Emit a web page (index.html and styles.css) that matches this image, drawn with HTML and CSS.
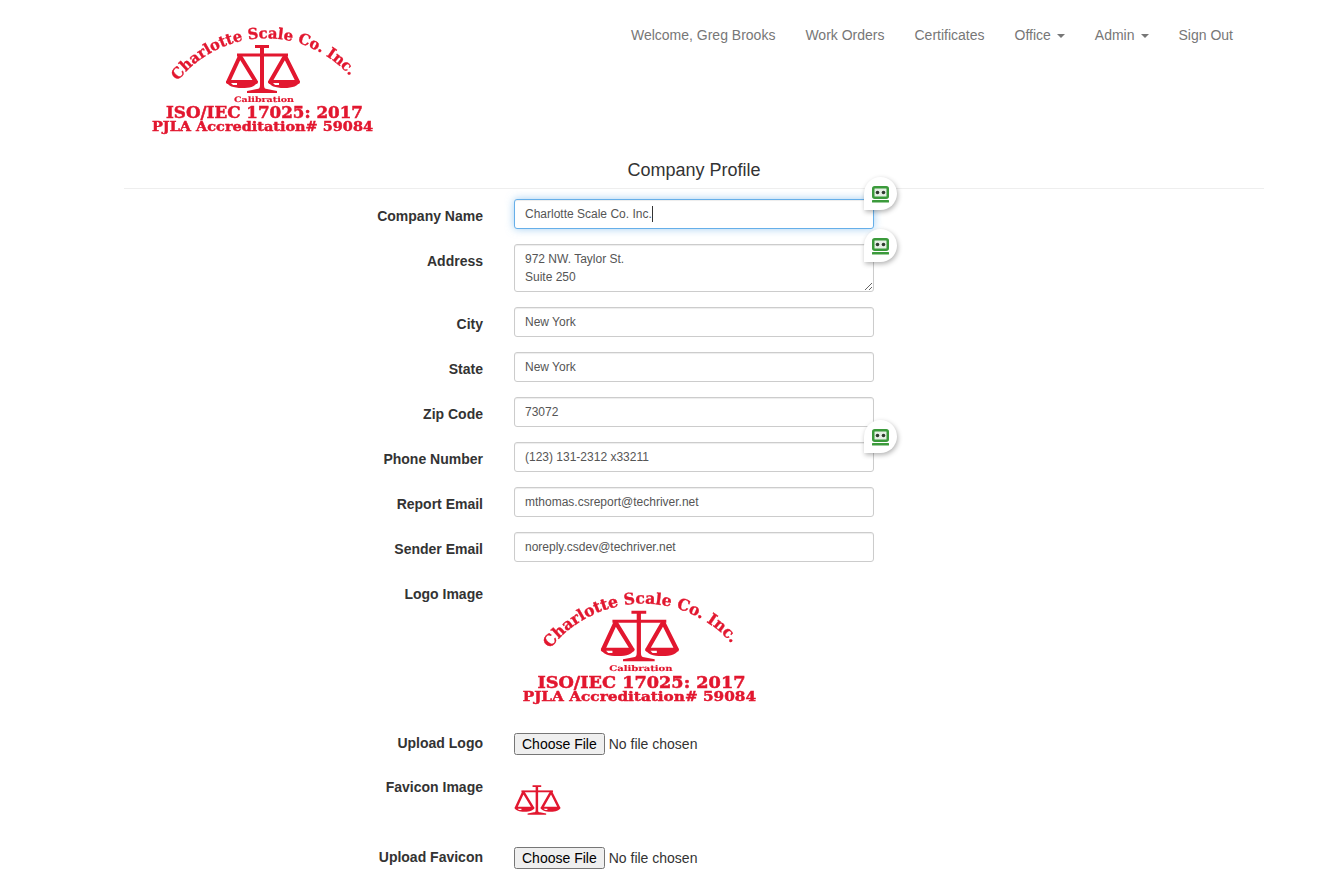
FILE: index.html
```html
<!DOCTYPE html>
<html lang="en">
<head>
<meta charset="utf-8">
<title>Company Profile</title>
<link rel="stylesheet" href="styles.css">
</head>
<body>
<div class="page">
  <header class="topbar">
    <a class="brand" href="#">
      <svg class="logo logo-nav" viewBox="0 0 250 125" aria-label="Charlotte Scale Co. Inc. logo">
        <defs><path id="arc1" d="M38 66 A 112 112 0 0 1 214 66"/></defs>
        <text class="logo-arc"><textPath href="#arc1" textLength="196" lengthAdjust="spacingAndGlyphs">Charlotte Scale Co. Inc.</textPath></text>
        <g class="scale">
          <path class="solid" d="M115 30h14v3h-5v37c0 3 1 4 3 4l10 2v2h-30v-2l10-2c2 0 3-1 3-4V33h-5z"/>
          <path class="solid" d="M97 38.500h51v3H97z"/>
          <path class="pan" d="M100 41 88 67h28z"/>
          <path class="solid" d="M86 66h32c-2 5-7 7-16 7s-14-2-16-7z"/>
          <path class="shine" d="M91 68h6v2h-4z"/>
          <path class="pan" d="M145 41 130 67h28z"/>
          <path class="solid" d="M128 66h32c-2 5-7 7-16 7s-14-2-16-7z"/>
          <path class="shine" d="M133 68h6v2h-4z"/>
        </g>
        <text class="logo-small" x="94" y="87" textLength="60" lengthAdjust="spacingAndGlyphs">Calibration</text>
        <text class="logo-iso" x="26" y="103" textLength="197" lengthAdjust="spacingAndGlyphs">ISO/IEC 17025: 2017</text>
        <text class="logo-pjla" x="12" y="116" textLength="221" lengthAdjust="spacingAndGlyphs">PJLA Accreditation# 59084</text>
      </svg>
    </a>
    <nav class="nav">
      <a href="#">Welcome, Greg Brooks</a>
      <a href="#">Work Orders</a>
      <a href="#">Certificates</a>
      <a href="#">Office<span class="caret"></span></a>
      <a href="#">Admin<span class="caret"></span></a>
      <a href="#">Sign Out</a>
    </nav>
  </header>

  <h1 class="title">Company Profile</h1>

  <form class="form">
    <div class="row">
      <label class="label">Company Name</label>
      <div class="field">
        <input class="control focused" type="text" value="Charlotte Scale Co. Inc.">
        <span class="text-caret"></span>
        <span class="robo"><svg class="robo-icon" viewBox="0 0 17 17"><rect class="frame" x="1.250" y="1.250" width="14.500" height="10.500" rx="1.500"/><circle class="eye" cx="5.500" cy="6.500" r="1.800"/><circle class="eye" cx="11.500" cy="6.500" r="1.800"/><rect class="bar" x="0" y="14" width="17" height="2.500" rx=".5"/></svg></span>
      </div>
    </div>
    <div class="row">
      <label class="label">Address</label>
      <div class="field">
        <textarea class="control area" rows="2">972 NW. Taylor St.
Suite 250</textarea>
        <span class="robo robo-area"><svg class="robo-icon" viewBox="0 0 17 17"><rect class="frame" x="1.250" y="1.250" width="14.500" height="10.500" rx="1.500"/><circle class="eye" cx="5.500" cy="6.500" r="1.800"/><circle class="eye" cx="11.500" cy="6.500" r="1.800"/><rect class="bar" x="0" y="14" width="17" height="2.500" rx=".5"/></svg></span>
      </div>
    </div>
    <div class="row">
      <label class="label">City</label>
      <div class="field"><input class="control" type="text" value="New York"></div>
    </div>
    <div class="row">
      <label class="label">State</label>
      <div class="field"><input class="control" type="text" value="New York"></div>
    </div>
    <div class="row">
      <label class="label">Zip Code</label>
      <div class="field"><input class="control" type="text" value="73072"></div>
    </div>
    <div class="row">
      <label class="label">Phone Number</label>
      <div class="field">
        <input class="control" type="text" value="(123) 131-2312 x33211">
        <span class="robo"><svg class="robo-icon" viewBox="0 0 17 17"><rect class="frame" x="1.250" y="1.250" width="14.500" height="10.500" rx="1.500"/><circle class="eye" cx="5.500" cy="6.500" r="1.800"/><circle class="eye" cx="11.500" cy="6.500" r="1.800"/><rect class="bar" x="0" y="14" width="17" height="2.500" rx=".5"/></svg></span>
      </div>
    </div>
    <div class="row">
      <label class="label">Report Email</label>
      <div class="field"><input class="control" type="text" value="mthomas.csreport@techriver.net"></div>
    </div>
    <div class="row">
      <label class="label">Sender Email</label>
      <div class="field"><input class="control" type="text" value="noreply.csdev@techriver.net"></div>
    </div>
    <div class="row">
      <label class="label">Logo Image</label>
      <div class="field">
        <svg class="logo logo-form" viewBox="0 0 250 125" aria-label="Charlotte Scale Co. Inc. logo">
          <defs><path id="arc2" d="M38 66 A 112 112 0 0 1 214 66"/></defs>
          <text class="logo-arc"><textPath href="#arc2" textLength="196" lengthAdjust="spacingAndGlyphs">Charlotte Scale Co. Inc.</textPath></text>
          <g class="scale">
            <path class="solid" d="M115 30h14v3h-5v37c0 3 1 4 3 4l10 2v2h-30v-2l10-2c2 0 3-1 3-4V33h-5z"/>
            <path class="solid" d="M97 38.500h51v3H97z"/>
            <path class="pan" d="M100 41 88 67h28z"/>
            <path class="solid" d="M86 66h32c-2 5-7 7-16 7s-14-2-16-7z"/>
            <path class="shine" d="M91 68h6v2h-4z"/>
            <path class="pan" d="M145 41 130 67h28z"/>
            <path class="solid" d="M128 66h32c-2 5-7 7-16 7s-14-2-16-7z"/>
            <path class="shine" d="M133 68h6v2h-4z"/>
          </g>
          <text class="logo-small" x="94" y="87" textLength="60" lengthAdjust="spacingAndGlyphs">Calibration</text>
          <text class="logo-iso" x="26" y="103" textLength="197" lengthAdjust="spacingAndGlyphs">ISO/IEC 17025: 2017</text>
          <text class="logo-pjla" x="12" y="116" textLength="221" lengthAdjust="spacingAndGlyphs">PJLA Accreditation# 59084</text>
        </svg>
      </div>
    </div>
    <div class="row">
      <label class="label">Upload Logo</label>
      <div class="field"><input class="file" type="file"></div>
    </div>
    <div class="row">
      <label class="label">Favicon Image</label>
      <div class="field">
        <svg class="favicon" viewBox="85 29 76 50" aria-label="Scale icon">
          <g class="scale">
            <path class="solid" d="M115 30h14v3h-5v37c0 3 1 4 3 4l10 2v2h-30v-2l10-2c2 0 3-1 3-4V33h-5z"/>
            <path class="solid" d="M97 38.500h51v3H97z"/>
            <path class="pan" d="M100 41 88 67h28z"/>
            <path class="solid" d="M86 66h32c-2 5-7 7-16 7s-14-2-16-7z"/>
            <path class="shine" d="M91 68h6v2h-4z"/>
            <path class="pan" d="M145 41 130 67h28z"/>
            <path class="solid" d="M128 66h32c-2 5-7 7-16 7s-14-2-16-7z"/>
            <path class="shine" d="M133 68h6v2h-4z"/>
          </g>
        </svg>
      </div>
    </div>
    <div class="row last">
      <label class="label">Upload Favicon</label>
      <div class="field"><input class="file" type="file"></div>
    </div>
  </form>
</div>
</body>
</html>
```
FILE: styles.css
```css
* { box-sizing: border-box; }
html, body { margin: 0; padding: 0; background: #fff; }
body {
  font-family: "Liberation Sans", Arial, sans-serif;
  font-size: 14px;
  line-height: 20px;
  color: #333;
  overflow: hidden;
}
.page { width: 1140px; margin-left: 124px; }

.topbar { display: flex; justify-content: space-between; align-items: flex-start; height: 153px; }
.brand { display: block; margin-top: 15px; margin-left: 16px; }
.logo { display: block; filter: blur(.3px); }
.logo-nav { width: 250px; height: 125px; }
.nav { display: flex; gap: 30px; padding: 25px 31px 0 0; }
.nav a { color: #777; text-decoration: none; }
.caret {
  display: inline-block; width: 0; height: 0; margin-left: 6px; vertical-align: middle;
  border-top: 4px solid #777; border-left: 4px solid transparent; border-right: 4px solid transparent;
}

.title {
  margin: 0 0 10px; padding: 7px 0 8px; height: 36px;
  font-size: 18px; line-height: 20px; font-weight: 400; text-align: center; color: #333;
  border-bottom: 1px solid #eee;
}

.form { display: flex; flex-direction: column; }
.row { display: grid; grid-template-columns: 359px 360px; column-gap: 31px; margin-bottom: 15px; }
.row.last { margin-bottom: 0; }
.label { padding-top: 7px; text-align: right; font-weight: 700; color: #333; }
.field { position: relative; }

.control {
  display: block; width: 360px; height: 30px; padding: 5px 10px;
  font-family: "Liberation Sans", Arial, sans-serif; font-size: 12px; line-height: 18px; color: #555;
  background: #fff; border: 1px solid #ccc; border-radius: 3px;
  box-shadow: inset 0 1px 1px rgba(0,0,0,.075);
  outline: none;
}
.control.focused {
  border-color: #66afe9;
  box-shadow: inset 0 1px 1px rgba(0,0,0,.075), 0 0 8px rgba(102,175,233,.6);
}
.area { height: 48px; resize: vertical; }
.text-caret { position: absolute; left: 138px; top: 7px; width: 1px; height: 16px; background: #333; }

.robo {
  position: absolute; right: -23px; top: -22px; width: 33px; height: 33px; padding-top: 1px;
  display: flex; align-items: center; justify-content: center;
  background: #fff; border-radius: 50% 50% 50% 0;
  box-shadow: 1px 2px 5px rgba(0,0,0,.3);
}
.robo-area { top: -15px; }
.robo-icon { width: 17px; height: 17px; }
.robo-icon .frame { fill: #e6efe6; stroke: #3b9a3b; stroke-width: 2.500; }
.robo-icon .bar { fill: #3b9a3b; }
.robo-icon .eye { fill: #2f3a2f; }

.logo-form { width: 264px; height: 132px; margin: 2px 0 0 -4px; }
.favicon { display: block; width: 47px; height: 34px; margin: 13px 0 8px; }

.file { display: block; width: 360px; margin-top: 7px; font-family: "Liberation Sans", Arial, sans-serif; font-size: 14px; line-height: 20px; color: #333; }

.scale .solid { fill: #e2172f; }
.scale .pan { fill: none; stroke: #e2172f; stroke-width: 4; stroke-linejoin: round; }
.scale .shine { fill: #fff; }
.logo text { fill: #e2172f; stroke: #e2172f; font-family: "DejaVu Serif", "Liberation Serif", serif; font-weight: 700; }
.logo-arc { font-size: 15px; stroke-width: .35; }
.logo-small { font-size: 7.500px; stroke-width: .15; }
.logo-iso { font-size: 16px; stroke-width: .5; }
.logo-pjla { font-size: 12.500px; stroke-width: .45; }
```
